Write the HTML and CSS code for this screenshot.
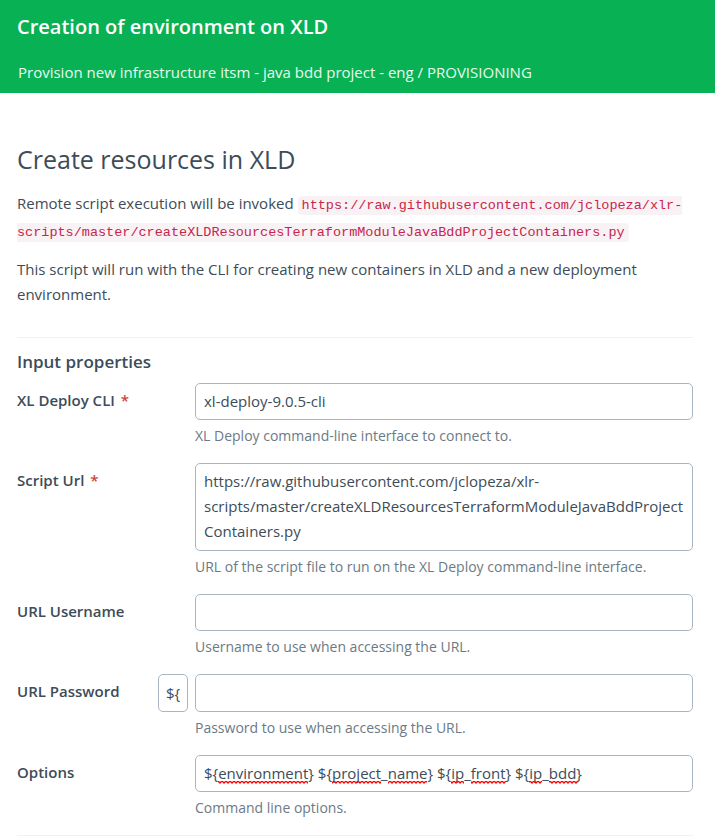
FILE: index.html
```html
<!DOCTYPE html>
<html lang="en">
<head>
<meta charset="utf-8">
<meta name="viewport" content="width=device-width, initial-scale=1">
<title>Creation of environment on XLD</title>
<link rel="stylesheet" href="styles.css">
</head>
<body>
<header class="task-header">
  <h1 class="task-title">Creation of environment on XLD</h1>
  <p class="task-path">Provision new infrastructure itsm - java bdd project - eng / PROVISIONING</p>
</header>
<main class="task-body">
  <section class="description">
    <h2 class="description-title">Create resources in XLD</h2>
    <p class="with-code">Remote script execution will be invoked <code>https://raw.githubusercontent.com/jclopeza/xlr-scripts/master/createXLDResourcesTerraformModuleJavaBddProjectContainers.py</code></p>
    <p>This script will run with the CLI for creating new containers in XLD and a new deployment environment.</p>
  </section>
  <form class="properties">
    <h3 class="properties-title">Input properties</h3>
    <div class="row">
      <label class="label" for="cli">XL Deploy CLI <span class="required">*</span></label>
      <div class="field">
        <input class="control" id="cli" type="text" value="xl-deploy-9.0.5-cli">
        <p class="hint">XL Deploy command-line interface to connect to.</p>
      </div>
    </div>
    <div class="row">
      <label class="label" for="script-url">Script Url <span class="required">*</span></label>
      <div class="field">
        <textarea class="control multiline" id="script-url" rows="3" spellcheck="false">https://raw.githubusercontent.com/jclopeza/xlr-scripts/master/createXLDResourcesTerraformModuleJavaBddProjectContainers.py</textarea>
        <p class="hint">URL of the script file to run on the XL Deploy command-line interface.</p>
      </div>
    </div>
    <div class="row">
      <label class="label" for="username">URL Username</label>
      <div class="field">
        <input class="control" id="username" type="text">
        <p class="hint">Username to use when accessing the URL.</p>
      </div>
    </div>
    <div class="row">
      <div class="label-group">
        <label class="label" for="password">URL Password</label>
        <button class="variable-button" type="button">${</button>
      </div>
      <div class="field">
        <input class="control secret" id="password" type="password">
        <p class="hint">Password to use when accessing the URL.</p>
      </div>
    </div>
    <div class="row">
      <label class="label" for="options">Options</label>
      <div class="field">
        <input class="control" id="options" type="text" spellcheck="false" value="${environment} ${project_name} ${ip_front} ${ip_bdd}">
        <svg class="spelling" width="400" height="3" viewBox="0 0 400 3" aria-hidden="true">
          <defs>
            <pattern id="wave" width="4" height="3" patternUnits="userSpaceOnUse">
              <path d="M-1 0L1 2L3 0L5 2" fill="none" stroke="#f00" stroke-width="1.3"/>
            </pattern>
          </defs>
          <g fill="url(#wave)">
            <rect x="23" width="90" height="3"/>
            <rect x="137" width="49" height="3"/>
            <rect x="193" width="39" height="3"/>
            <rect x="256" width="13" height="3"/>
            <rect x="276" width="35" height="3"/>
            <rect x="334" width="13" height="3"/>
            <rect x="354" width="29" height="3"/>
          </g>
        </svg>
        <p class="hint">Command line options.</p>
      </div>
    </div>
  </form>
</main>
</body>
</html>
```
FILE: styles.css
```css
* {
  box-sizing: border-box;
}

body {
  margin: 0;
  background: #fff;
  color: #3d4c58;
  font: 15px/25px "Open Sans", "Noto Sans", sans-serif;
}

h1, h2, h3, p {
  margin: 0;
}

.task-header {
  padding: 12px 18px 8px;
  background: #08b153;
  color: #fff;
}

.task-title {
  margin: 0 -1px 18px;
  font-size: 20px;
  font-weight: 600;
  line-height: 30px;
}

.task-path {
  color: #e8f9ef;
}

.task-body {
  padding: 49px 22px 0 17px;
}

.description {
  padding-bottom: 30px;
  border-bottom: 1px solid #f0f2f3;
}

.description-title {
  margin-bottom: 15px;
  font-size: 25px;
  font-weight: 400;
  line-height: 34px;
}

.with-code {
  margin-bottom: 12px;
}

code {
  padding: 2px 4px;
  border-radius: 4px;
  background: #f9f2f4;
  color: #c7254e;
  font-family: "Liberation Mono", monospace;
  font-size: 90%;
}

.properties {
  padding-bottom: 15px;
  border-bottom: 1px solid #f0f2f3;
}

.properties-title {
  margin: 11px 0 9px;
  font-size: 17px;
  font-weight: 600;
}

.row {
  display: grid;
  grid-template-columns: 171px 1fr;
  column-gap: 7px;
  margin-bottom: 15px;
}

.row:last-child {
  margin-bottom: 0;
}

.label {
  padding-top: 5px;
  font-weight: 600;
}

.required {
  margin-left: 2px;
  color: #d0443a;
}

.label-group {
  display: flex;
  justify-content: space-between;
  align-items: flex-start;
}

.field {
  position: relative;
  min-width: 0;
}

.control,
.variable-button {
  display: block;
  height: 37px;
  border: 1px solid #a9b5c0;
  border-radius: 5px;
  background: #fff;
  color: inherit;
  font: inherit;
}

.control {
  width: 100%;
  padding: 4px 8px 5px;
}

.multiline {
  height: 88px;
  padding-top: 5px;
  overflow: hidden;
  resize: none;
  word-break: break-word;
}

.secret,
.variable-button {
  height: 38px;
}

.variable-button {
  width: 30px;
  padding: 0;
}

.spelling {
  position: absolute;
  top: 26px;
  left: 0;
}

.hint {
  padding-top: 3px;
  color: #6b7a85;
  font-size: 14px;
}
```
